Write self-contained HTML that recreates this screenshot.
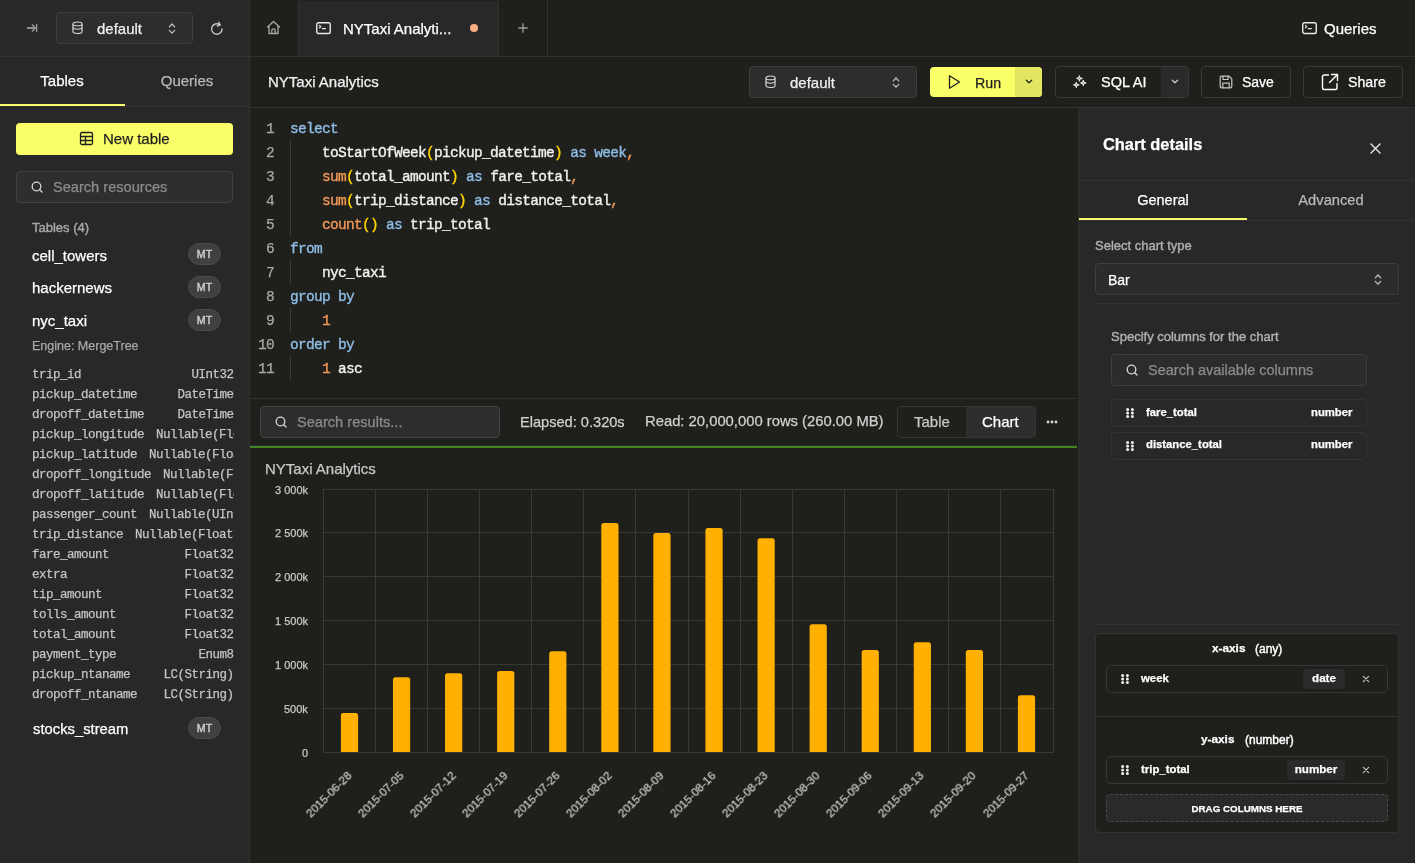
<!DOCTYPE html><html><head><meta charset="utf-8"><style>
html,body{margin:0;padding:0;}
body{width:1415px;height:863px;overflow:hidden;background:#1f1f1c;position:relative;font-family:'Liberation Sans', sans-serif;}
.t{position:absolute;white-space:nowrap;line-height:1;will-change:transform;-webkit-text-stroke-width:0.25px;}
.r{position:absolute;box-sizing:border-box;}
</style></head><body>
<div class="r" style="left:0px;top:0px;width:249px;height:863px;background:#282828;"></div>
<div class="r" style="left:249px;top:0px;width:1px;height:863px;background:#323232;"></div>
<div class="r" style="left:0px;top:56px;width:249px;height:1px;background:#323232;"></div>
<svg class="r" style="left:26px;top:23px;" width="12" height="10" viewBox="0 0 12 10" fill="none"><path d="M1 5H9" stroke="#9b9b9b" stroke-width="1.8"/><path d="M6 1.6L9.4 5L6 8.4" stroke="#9b9b9b" stroke-width="1.4" stroke-linejoin="round"/><path d="M10.6 1V9" stroke="#9b9b9b" stroke-width="1.3"/></svg>
<div class="r" style="left:56px;top:12px;width:137px;height:32px;background:#2d2d2d;border:1px solid #3e3e3e;border-radius:4px;"></div>
<svg class="r" style="left:71.5px;top:20.5px;" width="11" height="14" viewBox="0 0 11 14" fill="none"><path d="M1 2.8C1 1.6 3 1 5.5 1C8 1 10 1.6 10 2.8V10.7C10 11.9 8 12.5 5.5 12.5C3 12.5 1 11.9 1 10.7Z" stroke="#d8d8d8" stroke-width="1.2"/><path d="M1 3.2C1 4.3 3 4.8 5.5 4.8C8 4.8 10 4.3 10 3.2M1 6.6C1 7.7 3 8.2 5.5 8.2C8 8.2 10 7.7 10 6.6" stroke="#d8d8d8" stroke-width="1.1"/></svg>
<div class="t" style="left:97.00px;top:21.30px;font-size:15px;color:#f0f0f0;font-weight:normal;font-family:'Liberation Sans', sans-serif;">default</div>
<svg class="r" style="left:168px;top:22.5px;" width="8" height="11" viewBox="0 0 8 11" fill="none"><path d="M1.3 3.8L4 1L6.7 3.8M1.3 7.4L4 10.2L6.7 7.4" stroke="#c8c8c8" stroke-width="1.2" stroke-linecap="round" stroke-linejoin="round"/></svg>
<svg class="r" style="left:209px;top:20.8px;" width="16" height="16" viewBox="0 0 16 16" fill="none"><path d="M13 8A5.2 5.2 0 1 1 10.6 3.6" stroke="#c8c8c8" stroke-width="1.4" stroke-linecap="round"/><path d="M9.8 1.2L11.2 3.9L8.4 5" stroke="#c8c8c8" stroke-width="1.4" stroke-linecap="round" stroke-linejoin="round"/></svg>
<div class="t" style="left:0.00px;width:124px;text-align:center;top:72.90px;font-size:15px;color:#ffffff;font-weight:normal;font-family:'Liberation Sans', sans-serif;">Tables</div>
<div class="t" style="left:125.00px;width:124px;text-align:center;top:72.90px;font-size:15px;color:#b8b8b8;font-weight:normal;font-family:'Liberation Sans', sans-serif;">Queries</div>
<div class="r" style="left:0px;top:106px;width:249px;height:1px;background:#323232;"></div>
<div class="r" style="left:0px;top:104px;width:125px;height:2px;background:#faff69;"></div>
<div class="r" style="left:16px;top:123px;width:217px;height:32px;background:#faff69;border-radius:4px;"></div>
<svg class="r" style="left:79px;top:131px;" width="15" height="15" viewBox="0 0 15 15" fill="none"><rect x="1.5" y="1.5" width="12" height="12" rx="1.5" stroke="#1f1f1c" stroke-width="1.3"/><path d="M1.5 5.5H13.5M1.5 9.5H13.5M6.5 5.5V13.5" stroke="#1f1f1c" stroke-width="1.3"/></svg>
<div class="t" style="left:103.30px;top:131.30px;font-size:15px;color:#1f1f1c;font-weight:normal;font-family:'Liberation Sans', sans-serif;">New table</div>
<div class="r" style="left:16px;top:171px;width:217px;height:32px;background:#2e2e2e;border:1px solid #414141;border-radius:4px;"></div>
<svg class="r" style="left:31px;top:181px;" width="12" height="12" viewBox="0 0 12 12" fill="none"><circle cx="5.5" cy="5.5" r="4.3" stroke="#d8d8d8" stroke-width="1.3"/><path d="M8.7 8.7L11 11" stroke="#d8d8d8" stroke-width="1.3" stroke-linecap="round"/></svg>
<div class="t" style="left:53.40px;top:179.94px;font-size:14.6px;color:#8c8c8c;font-weight:normal;font-family:'Liberation Sans', sans-serif;">Search resources</div>
<div class="t" style="left:32.30px;top:221.09px;font-size:13px;color:#a8a8a8;font-weight:normal;font-family:'Liberation Sans', sans-serif;-webkit-text-stroke:0.4px #a8a8a8;">Tables (4)</div>
<div class="t" style="left:32.30px;top:247.70px;font-size:15px;color:#ffffff;font-weight:normal;font-family:'Liberation Sans', sans-serif;">cell_towers</div>
<div class="r" style="left:188px;top:243px;width:33px;height:22px;background:#404040;border:1px solid #4a4a4a;border-radius:11px;"></div>
<div class="t" style="left:188.00px;width:33px;text-align:center;top:249.32px;font-size:10.6px;color:#d0d0d0;font-weight:normal;font-family:'Liberation Sans', sans-serif;-webkit-text-stroke:0.4px #d0d0d0;">MT</div>
<div class="t" style="left:32.30px;top:280.30px;font-size:15px;color:#ffffff;font-weight:normal;font-family:'Liberation Sans', sans-serif;">hackernews</div>
<div class="r" style="left:188px;top:276px;width:33px;height:22px;background:#404040;border:1px solid #4a4a4a;border-radius:11px;"></div>
<div class="t" style="left:188.00px;width:33px;text-align:center;top:282.32px;font-size:10.6px;color:#d0d0d0;font-weight:normal;font-family:'Liberation Sans', sans-serif;-webkit-text-stroke:0.4px #d0d0d0;">MT</div>
<div class="t" style="left:32.30px;top:313.00px;font-size:15px;color:#ffffff;font-weight:normal;font-family:'Liberation Sans', sans-serif;">nyc_taxi</div>
<div class="r" style="left:188px;top:309px;width:33px;height:22px;background:#404040;border:1px solid #4a4a4a;border-radius:11px;"></div>
<div class="t" style="left:188.00px;width:33px;text-align:center;top:315.32px;font-size:10.6px;color:#d0d0d0;font-weight:normal;font-family:'Liberation Sans', sans-serif;-webkit-text-stroke:0.4px #d0d0d0;">MT</div>
<div class="t" style="left:32.30px;top:339.92px;font-size:12.5px;color:#a8a8a8;font-weight:normal;font-family:'Liberation Sans', sans-serif;">Engine: MergeTree</div>
<div class="t" style="left:32px;top:368.72px;width:201.5px;display:flex;font-family:'Liberation Mono', monospace;font-size:12.5px;letter-spacing:-0.5px;color:#c4c4c4;"><span style="flex:none;">trip_id</span><span style="flex:1;min-width:0;overflow:hidden;text-align:right;margin-left:12px;">UInt32</span></div>
<div class="t" style="left:32px;top:388.72px;width:201.5px;display:flex;font-family:'Liberation Mono', monospace;font-size:12.5px;letter-spacing:-0.5px;color:#c4c4c4;"><span style="flex:none;">pickup_datetime</span><span style="flex:1;min-width:0;overflow:hidden;text-align:right;margin-left:12px;">DateTime</span></div>
<div class="t" style="left:32px;top:408.72px;width:201.5px;display:flex;font-family:'Liberation Mono', monospace;font-size:12.5px;letter-spacing:-0.5px;color:#c4c4c4;"><span style="flex:none;">dropoff_datetime</span><span style="flex:1;min-width:0;overflow:hidden;text-align:right;margin-left:12px;">DateTime</span></div>
<div class="t" style="left:32px;top:428.72px;width:201.5px;display:flex;font-family:'Liberation Mono', monospace;font-size:12.5px;letter-spacing:-0.5px;color:#c4c4c4;"><span style="flex:none;">pickup_longitude</span><span style="flex:1;min-width:0;overflow:hidden;text-align:right;margin-left:12px;">Nullable(Float64)</span></div>
<div class="t" style="left:32px;top:448.72px;width:201.5px;display:flex;font-family:'Liberation Mono', monospace;font-size:12.5px;letter-spacing:-0.5px;color:#c4c4c4;"><span style="flex:none;">pickup_latitude</span><span style="flex:1;min-width:0;overflow:hidden;text-align:right;margin-left:12px;">Nullable(Float64)</span></div>
<div class="t" style="left:32px;top:468.72px;width:201.5px;display:flex;font-family:'Liberation Mono', monospace;font-size:12.5px;letter-spacing:-0.5px;color:#c4c4c4;"><span style="flex:none;">dropoff_longitude</span><span style="flex:1;min-width:0;overflow:hidden;text-align:right;margin-left:12px;">Nullable(Float64)</span></div>
<div class="t" style="left:32px;top:488.72px;width:201.5px;display:flex;font-family:'Liberation Mono', monospace;font-size:12.5px;letter-spacing:-0.5px;color:#c4c4c4;"><span style="flex:none;">dropoff_latitude</span><span style="flex:1;min-width:0;overflow:hidden;text-align:right;margin-left:12px;">Nullable(Float64)</span></div>
<div class="t" style="left:32px;top:508.72px;width:201.5px;display:flex;font-family:'Liberation Mono', monospace;font-size:12.5px;letter-spacing:-0.5px;color:#c4c4c4;"><span style="flex:none;">passenger_count</span><span style="flex:1;min-width:0;overflow:hidden;text-align:right;margin-left:12px;">Nullable(UInt8)</span></div>
<div class="t" style="left:32px;top:528.72px;width:201.5px;display:flex;font-family:'Liberation Mono', monospace;font-size:12.5px;letter-spacing:-0.5px;color:#c4c4c4;"><span style="flex:none;">trip_distance</span><span style="flex:1;min-width:0;overflow:hidden;text-align:right;margin-left:12px;">Nullable(Float32)</span></div>
<div class="t" style="left:32px;top:548.72px;width:201.5px;display:flex;font-family:'Liberation Mono', monospace;font-size:12.5px;letter-spacing:-0.5px;color:#c4c4c4;"><span style="flex:none;">fare_amount</span><span style="flex:1;min-width:0;overflow:hidden;text-align:right;margin-left:12px;">Float32</span></div>
<div class="t" style="left:32px;top:568.72px;width:201.5px;display:flex;font-family:'Liberation Mono', monospace;font-size:12.5px;letter-spacing:-0.5px;color:#c4c4c4;"><span style="flex:none;">extra</span><span style="flex:1;min-width:0;overflow:hidden;text-align:right;margin-left:12px;">Float32</span></div>
<div class="t" style="left:32px;top:588.72px;width:201.5px;display:flex;font-family:'Liberation Mono', monospace;font-size:12.5px;letter-spacing:-0.5px;color:#c4c4c4;"><span style="flex:none;">tip_amount</span><span style="flex:1;min-width:0;overflow:hidden;text-align:right;margin-left:12px;">Float32</span></div>
<div class="t" style="left:32px;top:608.72px;width:201.5px;display:flex;font-family:'Liberation Mono', monospace;font-size:12.5px;letter-spacing:-0.5px;color:#c4c4c4;"><span style="flex:none;">tolls_amount</span><span style="flex:1;min-width:0;overflow:hidden;text-align:right;margin-left:12px;">Float32</span></div>
<div class="t" style="left:32px;top:628.72px;width:201.5px;display:flex;font-family:'Liberation Mono', monospace;font-size:12.5px;letter-spacing:-0.5px;color:#c4c4c4;"><span style="flex:none;">total_amount</span><span style="flex:1;min-width:0;overflow:hidden;text-align:right;margin-left:12px;">Float32</span></div>
<div class="t" style="left:32px;top:648.72px;width:201.5px;display:flex;font-family:'Liberation Mono', monospace;font-size:12.5px;letter-spacing:-0.5px;color:#c4c4c4;"><span style="flex:none;">payment_type</span><span style="flex:1;min-width:0;overflow:hidden;text-align:right;margin-left:12px;">Enum8</span></div>
<div class="t" style="left:32px;top:668.72px;width:201.5px;display:flex;font-family:'Liberation Mono', monospace;font-size:12.5px;letter-spacing:-0.5px;color:#c4c4c4;"><span style="flex:none;">pickup_ntaname</span><span style="flex:1;min-width:0;overflow:hidden;text-align:right;margin-left:12px;">LC(String)</span></div>
<div class="t" style="left:32px;top:688.72px;width:201.5px;display:flex;font-family:'Liberation Mono', monospace;font-size:12.5px;letter-spacing:-0.5px;color:#c4c4c4;"><span style="flex:none;">dropoff_ntaname</span><span style="flex:1;min-width:0;overflow:hidden;text-align:right;margin-left:12px;">LC(String)</span></div>
<div class="t" style="left:32.70px;top:721.77px;font-size:14.8px;color:#ffffff;font-weight:normal;font-family:'Liberation Sans', sans-serif;">stocks_stream</div>
<div class="r" style="left:188px;top:717px;width:33px;height:22px;background:#404040;border:1px solid #4a4a4a;border-radius:11px;"></div>
<div class="t" style="left:188.00px;width:33px;text-align:center;top:723.32px;font-size:10.6px;color:#d0d0d0;font-weight:normal;font-family:'Liberation Sans', sans-serif;-webkit-text-stroke:0.4px #d0d0d0;">MT</div>
<div class="r" style="left:250px;top:56px;width:1165px;height:1px;background:#323232;"></div>
<div class="r" style="left:298px;top:0px;width:1px;height:56px;background:#323232;"></div>
<div class="r" style="left:299px;top:1px;width:199px;height:55px;background:#282828;"></div>
<div class="r" style="left:498px;top:1px;width:1px;height:55px;background:#323232;"></div>
<div class="r" style="left:547px;top:0px;width:1px;height:56px;background:#323232;"></div>
<svg class="r" style="left:266px;top:20px;" width="15" height="15" viewBox="0 0 15 15" fill="none"><path d="M1.5 7L7.5 1.5L13.5 7M3 5.8V13.5H12V5.8M5.8 13.5V10.5C5.8 9.5 6.6 8.8 7.5 8.8C8.4 8.8 9.2 9.5 9.2 10.5V13.5" stroke="#a8a8a8" stroke-width="1.3" stroke-linejoin="round" stroke-linecap="round"/></svg>
<svg class="r" style="left:315.5px;top:21.5px;" width="15" height="13" viewBox="0 0 15 13" fill="none"><rect x="0.75" y="0.75" width="13.5" height="10.8" rx="1.8" stroke="#e8e8e8" stroke-width="1.4"/><path d="M3.4 3.4L4.9 4.6L3.4 5.8M6.2 6.6H9.4" stroke="#e8e8e8" stroke-width="1.2" stroke-linecap="round" stroke-linejoin="round"/></svg>
<div class="t" style="left:343.40px;top:21.30px;font-size:15px;color:#ffffff;font-weight:normal;font-family:'Liberation Sans', sans-serif;">NYTaxi Analyti...</div>
<div class="r" style="left:470px;top:24px;width:8px;height:8px;border-radius:50%;background:#f7ae84;"></div>
<svg class="r" style="left:518px;top:23px;" width="10" height="10" viewBox="0 0 10 10" fill="none"><path d="M5 0.3V9.7M0.3 5H9.7" stroke="#9c9c9c" stroke-width="1.3"/></svg>
<svg class="r" style="left:1301.5px;top:21.5px;" width="15" height="13" viewBox="0 0 15 13" fill="none"><rect x="0.75" y="0.75" width="13.5" height="10.8" rx="1.8" stroke="#e8e8e8" stroke-width="1.4"/><path d="M3.4 3.4L4.9 4.6L3.4 5.8M6.2 6.6H9.4" stroke="#e8e8e8" stroke-width="1.2" stroke-linecap="round" stroke-linejoin="round"/></svg>
<div class="t" style="left:1324.40px;top:21.20px;font-size:15px;color:#ffffff;font-weight:normal;font-family:'Liberation Sans', sans-serif;">Queries</div>
<div class="t" style="left:268.00px;top:74.30px;font-size:15px;color:#f0f0f0;font-weight:normal;font-family:'Liberation Sans', sans-serif;">NYTaxi Analytics</div>
<div class="r" style="left:250px;top:107px;width:1165px;height:1px;background:#323232;"></div>
<div class="r" style="left:749px;top:66px;width:168px;height:32px;background:#2d2d2d;border:1px solid #3e3e3e;border-radius:4px;"></div>
<svg class="r" style="left:764.5px;top:75px;" width="11" height="14" viewBox="0 0 11 14" fill="none"><path d="M1 2.8C1 1.6 3 1 5.5 1C8 1 10 1.6 10 2.8V10.7C10 11.9 8 12.5 5.5 12.5C3 12.5 1 11.9 1 10.7Z" stroke="#d8d8d8" stroke-width="1.2"/><path d="M1 3.2C1 4.3 3 4.8 5.5 4.8C8 4.8 10 4.3 10 3.2M1 6.6C1 7.7 3 8.2 5.5 8.2C8 8.2 10 7.7 10 6.6" stroke="#d8d8d8" stroke-width="1.1"/></svg>
<div class="t" style="left:790.30px;top:75.00px;font-size:15px;color:#f0f0f0;font-weight:normal;font-family:'Liberation Sans', sans-serif;">default</div>
<svg class="r" style="left:892px;top:76.5px;" width="8" height="11" viewBox="0 0 8 11" fill="none"><path d="M1.3 3.8L4 1L6.7 3.8M1.3 7.4L4 10.2L6.7 7.4" stroke="#c8c8c8" stroke-width="1.2" stroke-linecap="round" stroke-linejoin="round"/></svg>
<div class="r" style="left:930px;top:67px;width:112px;height:30px;background:#faff69;border-radius:4px;overflow:hidden;"></div>
<div class="r" style="left:1015px;top:67px;width:27px;height:30px;background:#e2e55f;border-radius:0 4px 4px 0;"></div>
<svg class="r" style="left:948px;top:74px;" width="13" height="16" viewBox="0 0 13 16" fill="none"><path d="M1.5 1.8V14.2L11.5 8Z" stroke="#1f1f1c" stroke-width="1.3" stroke-linejoin="round"/></svg>
<div class="t" style="left:974.80px;top:75.98px;font-size:14.2px;color:#1f1f1c;font-weight:normal;font-family:'Liberation Sans', sans-serif;">Run</div>
<svg class="r" style="left:1025px;top:79px;" width="8" height="6" viewBox="0 0 8 6" fill="none"><path d="M1.3 1.2L4 3.8L6.7 1.2" stroke="#1f1f1c" stroke-width="1.2" stroke-linecap="round" stroke-linejoin="round"/></svg>
<div class="r" style="left:1055px;top:66px;width:134px;height:32px;border:1px solid #3a3a3a;border-radius:4px;"></div>
<div class="r" style="left:1161px;top:67px;width:27px;height:30px;background:#2a2a2a;border-radius:0 3px 3px 0;"></div>
<svg class="r" style="left:1073px;top:75px;" width="14" height="14" viewBox="0 0 14 14" fill="none"><path d="M6.4 0.7999999999999998Q6.4 3.4 9.0 3.4Q6.4 3.4 6.4 6.0Q6.4 3.4 3.8000000000000003 3.4Q6.4 3.4 6.4 0.7999999999999998ZM10.3 5.300000000000001Q10.3 7.9 12.9 7.9Q10.3 7.9 10.3 10.5Q10.3 7.9 7.700000000000001 7.9Q10.3 7.9 10.3 5.300000000000001ZM3.3 7.300000000000001Q3.3 9.9 5.9 9.9Q3.3 9.9 3.3 12.5Q3.3 9.9 0.6999999999999997 9.9Q3.3 9.9 3.3 7.300000000000001Z" stroke="#e8e8e8" stroke-width="1.1" stroke-linejoin="round"/></svg>
<div class="t" style="left:1100.80px;top:75.42px;font-size:14.5px;color:#ffffff;font-weight:normal;font-family:'Liberation Sans', sans-serif;">SQL AI</div>
<svg class="r" style="left:1171px;top:79px;" width="8" height="6" viewBox="0 0 8 6" fill="none"><path d="M1.3 1.2L4 3.8L6.7 1.2" stroke="#d0d0d0" stroke-width="1.2" stroke-linecap="round" stroke-linejoin="round"/></svg>
<div class="r" style="left:1201px;top:66px;width:90px;height:32px;border:1px solid #3a3a3a;border-radius:4px;"></div>
<svg class="r" style="left:1218.5px;top:74.5px;" width="14" height="14" viewBox="0 0 14 14" fill="none"><path d="M1.2 2.5C1.2 1.8 1.8 1.2 2.5 1.2H10L12.8 4V11.5C12.8 12.2 12.2 12.8 11.5 12.8H2.5C1.8 12.8 1.2 12.2 1.2 11.5Z M4 1.2V4.5H9V1.2 M3.8 12.8V8.2H10.2V12.8" stroke="#c8c8c8" stroke-width="1.2" stroke-linejoin="round"/></svg>
<div class="t" style="left:1241.70px;top:74.85px;font-size:14px;color:#ffffff;font-weight:normal;font-family:'Liberation Sans', sans-serif;">Save</div>
<div class="r" style="left:1303px;top:66px;width:100px;height:32px;border:1px solid #3a3a3a;border-radius:4px;"></div>
<svg class="r" style="left:1321px;top:73px;" width="18" height="18" viewBox="0 0 18 18" fill="none"><path d="M7.5 2H3C2.2 2 1.5 2.7 1.5 3.5V15C1.5 15.8 2.2 16.5 3 16.5H14.5C15.3 16.5 16 15.8 16 15V10.5 M10.5 1.5H16.5V7.5 M16.5 1.5L8.5 9.5" stroke="#ffffff" stroke-width="1.4" stroke-linecap="round" stroke-linejoin="round"/></svg>
<div class="t" style="left:1348.20px;top:74.68px;font-size:14.2px;color:#ffffff;font-weight:normal;font-family:'Liberation Sans', sans-serif;">Share</div>
<div class="t" style="right:1141.30px;top:121.89px;font-size:14.5px;color:#a8a8a8;font-weight:normal;font-family:'Liberation Mono', monospace;letter-spacing:-0.7px;">1</div>
<div class="t" style="left:289.70px;top:121.89px;font-size:14.5px;color:#fff;font-weight:normal;font-family:'Liberation Mono', monospace;letter-spacing:-0.7px;"><span style="color:#8fbde6;-webkit-text-stroke:0.35px #8fbde6">select</span></div>
<div class="t" style="right:1141.30px;top:145.89px;font-size:14.5px;color:#a8a8a8;font-weight:normal;font-family:'Liberation Mono', monospace;letter-spacing:-0.7px;">2</div>
<div class="t" style="left:289.70px;top:145.89px;font-size:14.5px;color:#fff;font-weight:normal;font-family:'Liberation Mono', monospace;letter-spacing:-0.7px;"><span style="color:#fff;-webkit-text-stroke:0.35px #fff">&nbsp;&nbsp;&nbsp;&nbsp;</span><span style="color:#f2f2f2;-webkit-text-stroke:0.35px #f2f2f2">toStartOfWeek</span><span style="color:#ffd500;-webkit-text-stroke:0.35px #ffd500">(</span><span style="color:#f2f2f2;-webkit-text-stroke:0.35px #f2f2f2">pickup_datetime</span><span style="color:#ffd500;-webkit-text-stroke:0.35px #ffd500">)</span><span style="color:#fff;-webkit-text-stroke:0.35px #fff">&nbsp;</span><span style="color:#8fbde6;-webkit-text-stroke:0.35px #8fbde6">as</span><span style="color:#fff;-webkit-text-stroke:0.35px #fff">&nbsp;</span><span style="color:#8fbde6;-webkit-text-stroke:0.35px #8fbde6">week</span><span style="color:#f39a57;-webkit-text-stroke:0.35px #f39a57">,</span></div>
<div class="t" style="right:1141.30px;top:169.89px;font-size:14.5px;color:#a8a8a8;font-weight:normal;font-family:'Liberation Mono', monospace;letter-spacing:-0.7px;">3</div>
<div class="t" style="left:289.70px;top:169.89px;font-size:14.5px;color:#fff;font-weight:normal;font-family:'Liberation Mono', monospace;letter-spacing:-0.7px;"><span style="color:#fff;-webkit-text-stroke:0.35px #fff">&nbsp;&nbsp;&nbsp;&nbsp;</span><span style="color:#f39a57;-webkit-text-stroke:0.35px #f39a57">sum</span><span style="color:#ffd500;-webkit-text-stroke:0.35px #ffd500">(</span><span style="color:#f2f2f2;-webkit-text-stroke:0.35px #f2f2f2">total_amount</span><span style="color:#ffd500;-webkit-text-stroke:0.35px #ffd500">)</span><span style="color:#fff;-webkit-text-stroke:0.35px #fff">&nbsp;</span><span style="color:#8fbde6;-webkit-text-stroke:0.35px #8fbde6">as</span><span style="color:#fff;-webkit-text-stroke:0.35px #fff">&nbsp;</span><span style="color:#f2f2f2;-webkit-text-stroke:0.35px #f2f2f2">fare_total</span><span style="color:#f39a57;-webkit-text-stroke:0.35px #f39a57">,</span></div>
<div class="t" style="right:1141.30px;top:193.89px;font-size:14.5px;color:#a8a8a8;font-weight:normal;font-family:'Liberation Mono', monospace;letter-spacing:-0.7px;">4</div>
<div class="t" style="left:289.70px;top:193.89px;font-size:14.5px;color:#fff;font-weight:normal;font-family:'Liberation Mono', monospace;letter-spacing:-0.7px;"><span style="color:#fff;-webkit-text-stroke:0.35px #fff">&nbsp;&nbsp;&nbsp;&nbsp;</span><span style="color:#f39a57;-webkit-text-stroke:0.35px #f39a57">sum</span><span style="color:#ffd500;-webkit-text-stroke:0.35px #ffd500">(</span><span style="color:#f2f2f2;-webkit-text-stroke:0.35px #f2f2f2">trip_distance</span><span style="color:#ffd500;-webkit-text-stroke:0.35px #ffd500">)</span><span style="color:#fff;-webkit-text-stroke:0.35px #fff">&nbsp;</span><span style="color:#8fbde6;-webkit-text-stroke:0.35px #8fbde6">as</span><span style="color:#fff;-webkit-text-stroke:0.35px #fff">&nbsp;</span><span style="color:#f2f2f2;-webkit-text-stroke:0.35px #f2f2f2">distance_total</span><span style="color:#f39a57;-webkit-text-stroke:0.35px #f39a57">,</span></div>
<div class="t" style="right:1141.30px;top:217.89px;font-size:14.5px;color:#a8a8a8;font-weight:normal;font-family:'Liberation Mono', monospace;letter-spacing:-0.7px;">5</div>
<div class="t" style="left:289.70px;top:217.89px;font-size:14.5px;color:#fff;font-weight:normal;font-family:'Liberation Mono', monospace;letter-spacing:-0.7px;"><span style="color:#fff;-webkit-text-stroke:0.35px #fff">&nbsp;&nbsp;&nbsp;&nbsp;</span><span style="color:#f39a57;-webkit-text-stroke:0.35px #f39a57">count</span><span style="color:#ffd500;-webkit-text-stroke:0.35px #ffd500">()</span><span style="color:#fff;-webkit-text-stroke:0.35px #fff">&nbsp;</span><span style="color:#8fbde6;-webkit-text-stroke:0.35px #8fbde6">as</span><span style="color:#fff;-webkit-text-stroke:0.35px #fff">&nbsp;</span><span style="color:#f2f2f2;-webkit-text-stroke:0.35px #f2f2f2">trip_total</span></div>
<div class="t" style="right:1141.30px;top:241.89px;font-size:14.5px;color:#a8a8a8;font-weight:normal;font-family:'Liberation Mono', monospace;letter-spacing:-0.7px;">6</div>
<div class="t" style="left:289.70px;top:241.89px;font-size:14.5px;color:#fff;font-weight:normal;font-family:'Liberation Mono', monospace;letter-spacing:-0.7px;"><span style="color:#8fbde6;-webkit-text-stroke:0.35px #8fbde6">from</span></div>
<div class="t" style="right:1141.30px;top:265.89px;font-size:14.5px;color:#a8a8a8;font-weight:normal;font-family:'Liberation Mono', monospace;letter-spacing:-0.7px;">7</div>
<div class="t" style="left:289.70px;top:265.89px;font-size:14.5px;color:#fff;font-weight:normal;font-family:'Liberation Mono', monospace;letter-spacing:-0.7px;"><span style="color:#fff;-webkit-text-stroke:0.35px #fff">&nbsp;&nbsp;&nbsp;&nbsp;</span><span style="color:#f2f2f2;-webkit-text-stroke:0.35px #f2f2f2">nyc_taxi</span></div>
<div class="t" style="right:1141.30px;top:289.89px;font-size:14.5px;color:#a8a8a8;font-weight:normal;font-family:'Liberation Mono', monospace;letter-spacing:-0.7px;">8</div>
<div class="t" style="left:289.70px;top:289.89px;font-size:14.5px;color:#fff;font-weight:normal;font-family:'Liberation Mono', monospace;letter-spacing:-0.7px;"><span style="color:#8fbde6;-webkit-text-stroke:0.35px #8fbde6">group&nbsp;by</span></div>
<div class="t" style="right:1141.30px;top:313.89px;font-size:14.5px;color:#a8a8a8;font-weight:normal;font-family:'Liberation Mono', monospace;letter-spacing:-0.7px;">9</div>
<div class="t" style="left:289.70px;top:313.89px;font-size:14.5px;color:#fff;font-weight:normal;font-family:'Liberation Mono', monospace;letter-spacing:-0.7px;"><span style="color:#fff;-webkit-text-stroke:0.35px #fff">&nbsp;&nbsp;&nbsp;&nbsp;</span><span style="color:#f39a57;-webkit-text-stroke:0.35px #f39a57">1</span></div>
<div class="t" style="right:1141.30px;top:337.89px;font-size:14.5px;color:#a8a8a8;font-weight:normal;font-family:'Liberation Mono', monospace;letter-spacing:-0.7px;">10</div>
<div class="t" style="left:289.70px;top:337.89px;font-size:14.5px;color:#fff;font-weight:normal;font-family:'Liberation Mono', monospace;letter-spacing:-0.7px;"><span style="color:#8fbde6;-webkit-text-stroke:0.35px #8fbde6">order&nbsp;by</span></div>
<div class="t" style="right:1141.30px;top:361.89px;font-size:14.5px;color:#a8a8a8;font-weight:normal;font-family:'Liberation Mono', monospace;letter-spacing:-0.7px;">11</div>
<div class="t" style="left:289.70px;top:361.89px;font-size:14.5px;color:#fff;font-weight:normal;font-family:'Liberation Mono', monospace;letter-spacing:-0.7px;"><span style="color:#fff;-webkit-text-stroke:0.35px #fff">&nbsp;&nbsp;&nbsp;&nbsp;</span><span style="color:#f39a57;-webkit-text-stroke:0.35px #f39a57">1</span><span style="color:#fff;-webkit-text-stroke:0.35px #fff">&nbsp;</span><span style="color:#f2f2f2;-webkit-text-stroke:0.35px #f2f2f2">asc</span></div>
<div class="r" style="left:290px;top:140px;width:1px;height:96px;background:#3c3c3c;"></div>
<div class="r" style="left:290px;top:260px;width:1px;height:24px;background:#3c3c3c;"></div>
<div class="r" style="left:290px;top:308px;width:1px;height:24px;background:#3c3c3c;"></div>
<div class="r" style="left:290px;top:356px;width:1px;height:24px;background:#3c3c3c;"></div>
<div class="r" style="left:250px;top:398px;width:828px;height:1px;background:#323232;"></div>
<div class="r" style="left:260px;top:406px;width:240px;height:32px;background:#2d2d2d;border:1px solid #424242;border-radius:4px;"></div>
<svg class="r" style="left:274.5px;top:416px;" width="12" height="12" viewBox="0 0 12 12" fill="none"><circle cx="5.5" cy="5.5" r="4.3" stroke="#d8d8d8" stroke-width="1.3"/><path d="M8.7 8.7L11 11" stroke="#d8d8d8" stroke-width="1.3" stroke-linecap="round"/></svg>
<div class="t" style="left:297.30px;top:414.84px;font-size:14.6px;color:#8c8c8c;font-weight:normal;font-family:'Liberation Sans', sans-serif;">Search results...</div>
<div class="t" style="left:519.50px;top:414.64px;font-size:14.6px;color:#d0d0d0;font-weight:normal;font-family:'Liberation Sans', sans-serif;">Elapsed: 0.320s</div>
<div class="t" style="left:645.00px;top:414.47px;font-size:14.8px;color:#d0d0d0;font-weight:normal;font-family:'Liberation Sans', sans-serif;">Read: 20,000,000 rows (260.00 MB)</div>
<div class="r" style="left:897px;top:406px;width:139px;height:32px;border:1px solid #363636;border-radius:4px;"></div>
<div class="r" style="left:966px;top:407px;width:69px;height:30px;background:#2e2e2e;border-radius:0 3px 3px 0;"></div>
<div class="t" style="left:914.30px;top:414.30px;font-size:15px;color:#c8c8c8;font-weight:normal;font-family:'Liberation Sans', sans-serif;">Table</div>
<div class="t" style="left:982.20px;top:414.30px;font-size:15px;color:#ffffff;font-weight:normal;font-family:'Liberation Sans', sans-serif;">Chart</div>
<svg class="r" style="left:1046px;top:420px;" width="12" height="4" viewBox="0 0 12 4" fill="none"><circle cx="2" cy="2" r="1.4" fill="#d8d8d8"/><circle cx="6" cy="2" r="1.4" fill="#d8d8d8"/><circle cx="10" cy="2" r="1.4" fill="#d8d8d8"/></svg>
<div class="r" style="left:250px;top:445px;width:828px;height:1px;background:#2d2a30;"></div>
<div class="r" style="left:250px;top:446px;width:828px;height:2px;background:#438525;"></div>
<div class="t" style="left:264.50px;top:461.30px;font-size:15px;color:#c8c8c8;font-weight:normal;font-family:'Liberation Sans', sans-serif;">NYTaxi Analytics</div>
<svg class="r" style="left:0;top:0" width="1415" height="863"><rect x="323" y="489" width="731" height="1" fill="#383838"/><rect x="323" y="532" width="731" height="1" fill="#383838"/><rect x="323" y="576" width="731" height="1" fill="#383838"/><rect x="323" y="620" width="731" height="1" fill="#383838"/><rect x="323" y="664" width="731" height="1" fill="#383838"/><rect x="323" y="708" width="731" height="1" fill="#383838"/><rect x="323" y="752" width="731" height="1" fill="#383838"/><rect x="323" y="489" width="1" height="264" fill="#383838"/><rect x="375" y="489" width="1" height="264" fill="#383838"/><rect x="427" y="489" width="1" height="264" fill="#383838"/><rect x="479" y="489" width="1" height="264" fill="#383838"/><rect x="531" y="489" width="1" height="264" fill="#383838"/><rect x="583" y="489" width="1" height="264" fill="#383838"/><rect x="635" y="489" width="1" height="264" fill="#383838"/><rect x="688" y="489" width="1" height="264" fill="#383838"/><rect x="740" y="489" width="1" height="264" fill="#383838"/><rect x="792" y="489" width="1" height="264" fill="#383838"/><rect x="844" y="489" width="1" height="264" fill="#383838"/><rect x="896" y="489" width="1" height="264" fill="#383838"/><rect x="948" y="489" width="1" height="264" fill="#383838"/><rect x="1000" y="489" width="1" height="264" fill="#383838"/><rect x="1053" y="489" width="1" height="264" fill="#383838"/><path d="M340.90 752 V715.50 Q340.90 713.00 343.40 713.00 H355.60 Q358.10 713.00 358.10 715.50 V752 Z" fill="#ffb000"/><path d="M392.98 752 V679.70 Q392.98 677.20 395.48 677.20 H407.68 Q410.18 677.20 410.18 679.70 V752 Z" fill="#ffb000"/><path d="M445.05 752 V675.70 Q445.05 673.20 447.55 673.20 H459.75 Q462.25 673.20 462.25 675.70 V752 Z" fill="#ffb000"/><path d="M497.13 752 V673.60 Q497.13 671.10 499.63 671.10 H511.83 Q514.33 671.10 514.33 673.60 V752 Z" fill="#ffb000"/><path d="M549.21 752 V653.70 Q549.21 651.20 551.71 651.20 H563.91 Q566.41 651.20 566.41 653.70 V752 Z" fill="#ffb000"/><path d="M601.28 752 V525.40 Q601.28 522.90 603.78 522.90 H615.99 Q618.49 522.90 618.49 525.40 V752 Z" fill="#ffb000"/><path d="M653.36 752 V535.60 Q653.36 533.10 655.86 533.10 H668.06 Q670.56 533.10 670.56 535.60 V752 Z" fill="#ffb000"/><path d="M705.44 752 V530.50 Q705.44 528.00 707.94 528.00 H720.14 Q722.64 528.00 722.64 530.50 V752 Z" fill="#ffb000"/><path d="M757.52 752 V540.80 Q757.52 538.30 760.02 538.30 H772.22 Q774.72 538.30 774.72 540.80 V752 Z" fill="#ffb000"/><path d="M809.59 752 V626.70 Q809.59 624.20 812.09 624.20 H824.29 Q826.79 624.20 826.79 626.70 V752 Z" fill="#ffb000"/><path d="M861.67 752 V652.60 Q861.67 650.10 864.17 650.10 H876.37 Q878.87 650.10 878.87 652.60 V752 Z" fill="#ffb000"/><path d="M913.75 752 V644.80 Q913.75 642.30 916.25 642.30 H928.45 Q930.95 642.30 930.95 644.80 V752 Z" fill="#ffb000"/><path d="M965.82 752 V652.60 Q965.82 650.10 968.32 650.10 H980.52 Q983.02 650.10 983.02 652.60 V752 Z" fill="#ffb000"/><path d="M1017.90 752 V697.80 Q1017.90 695.30 1020.40 695.30 H1032.60 Q1035.10 695.30 1035.10 697.80 V752 Z" fill="#ffb000"/></svg>
<div class="t" style="right:1107.00px;top:484.69px;font-size:11px;color:#c8c8c8;font-weight:normal;font-family:'Liberation Sans', sans-serif;">3 000k</div>
<div class="t" style="right:1107.00px;top:527.69px;font-size:11px;color:#c8c8c8;font-weight:normal;font-family:'Liberation Sans', sans-serif;">2 500k</div>
<div class="t" style="right:1107.00px;top:571.69px;font-size:11px;color:#c8c8c8;font-weight:normal;font-family:'Liberation Sans', sans-serif;">2 000k</div>
<div class="t" style="right:1107.00px;top:615.69px;font-size:11px;color:#c8c8c8;font-weight:normal;font-family:'Liberation Sans', sans-serif;">1 500k</div>
<div class="t" style="right:1107.00px;top:659.69px;font-size:11px;color:#c8c8c8;font-weight:normal;font-family:'Liberation Sans', sans-serif;">1 000k</div>
<div class="t" style="right:1107.00px;top:703.69px;font-size:11px;color:#c8c8c8;font-weight:normal;font-family:'Liberation Sans', sans-serif;">500k</div>
<div class="t" style="right:1107.00px;top:747.69px;font-size:11px;color:#c8c8c8;font-weight:normal;font-family:'Liberation Sans', sans-serif;">0</div>
<div class="t" style="left:345.50px;top:770.00px;font-size:11.5px;color:#c8c8c8;transform-origin:0 0;transform:rotate(-45deg) translateX(-100%);">2015-06-28</div>
<div class="t" style="left:397.58px;top:770.00px;font-size:11.5px;color:#c8c8c8;transform-origin:0 0;transform:rotate(-45deg) translateX(-100%);">2015-07-05</div>
<div class="t" style="left:449.65px;top:770.00px;font-size:11.5px;color:#c8c8c8;transform-origin:0 0;transform:rotate(-45deg) translateX(-100%);">2015-07-12</div>
<div class="t" style="left:501.73px;top:770.00px;font-size:11.5px;color:#c8c8c8;transform-origin:0 0;transform:rotate(-45deg) translateX(-100%);">2015-07-19</div>
<div class="t" style="left:553.81px;top:770.00px;font-size:11.5px;color:#c8c8c8;transform-origin:0 0;transform:rotate(-45deg) translateX(-100%);">2015-07-26</div>
<div class="t" style="left:605.88px;top:770.00px;font-size:11.5px;color:#c8c8c8;transform-origin:0 0;transform:rotate(-45deg) translateX(-100%);">2015-08-02</div>
<div class="t" style="left:657.96px;top:770.00px;font-size:11.5px;color:#c8c8c8;transform-origin:0 0;transform:rotate(-45deg) translateX(-100%);">2015-08-09</div>
<div class="t" style="left:710.04px;top:770.00px;font-size:11.5px;color:#c8c8c8;transform-origin:0 0;transform:rotate(-45deg) translateX(-100%);">2015-08-16</div>
<div class="t" style="left:762.12px;top:770.00px;font-size:11.5px;color:#c8c8c8;transform-origin:0 0;transform:rotate(-45deg) translateX(-100%);">2015-08-23</div>
<div class="t" style="left:814.19px;top:770.00px;font-size:11.5px;color:#c8c8c8;transform-origin:0 0;transform:rotate(-45deg) translateX(-100%);">2015-08-30</div>
<div class="t" style="left:866.27px;top:770.00px;font-size:11.5px;color:#c8c8c8;transform-origin:0 0;transform:rotate(-45deg) translateX(-100%);">2015-09-06</div>
<div class="t" style="left:918.35px;top:770.00px;font-size:11.5px;color:#c8c8c8;transform-origin:0 0;transform:rotate(-45deg) translateX(-100%);">2015-09-13</div>
<div class="t" style="left:970.42px;top:770.00px;font-size:11.5px;color:#c8c8c8;transform-origin:0 0;transform:rotate(-45deg) translateX(-100%);">2015-09-20</div>
<div class="t" style="left:1022.50px;top:770.00px;font-size:11.5px;color:#c8c8c8;transform-origin:0 0;transform:rotate(-45deg) translateX(-100%);">2015-09-27</div>
<div class="r" style="left:1077px;top:108px;width:1px;height:755px;background:#1b1b18;"></div>
<div class="r" style="left:1078px;top:108px;width:1px;height:755px;background:#323232;"></div>
<div class="r" style="left:1079px;top:108px;width:336px;height:755px;background:#282828;"></div>
<div class="t" style="left:1103.40px;top:136.31px;font-size:16.4px;color:#ffffff;font-weight:bold;font-family:'Liberation Sans', sans-serif;">Chart details</div>
<svg class="r" style="left:1369.5px;top:142.5px;" width="11" height="11" viewBox="0 0 11 11" fill="none"><path d="M1 1L10 10M10 1L1 10" stroke="#e8e8e8" stroke-width="1.4" stroke-linecap="round"/></svg>
<div class="r" style="left:1079px;top:180px;width:336px;height:1px;background:#323232;"></div>
<div class="t" style="left:1083.00px;width:160px;text-align:center;top:192.72px;font-size:14.5px;color:#ffffff;font-weight:normal;font-family:'Liberation Sans', sans-serif;">General</div>
<div class="t" style="left:1250.50px;width:160px;text-align:center;top:192.55px;font-size:14.7px;color:#b8b8b8;font-weight:normal;font-family:'Liberation Sans', sans-serif;">Advanced</div>
<div class="r" style="left:1079px;top:220px;width:336px;height:1px;background:#323232;"></div>
<div class="r" style="left:1079px;top:218px;width:168px;height:2px;background:#faff69;"></div>
<div class="t" style="left:1095.10px;top:238.99px;font-size:13px;color:#b0b0b0;font-weight:normal;font-family:'Liberation Sans', sans-serif;-webkit-text-stroke:0.4px #b0b0b0;">Select chart type</div>
<div class="r" style="left:1095px;top:263px;width:304px;height:32px;background:#2c2c2c;border:1px solid #3e3e3e;border-radius:4px;"></div>
<div class="t" style="left:1107.80px;top:272.55px;font-size:14px;color:#ffffff;font-weight:normal;font-family:'Liberation Sans', sans-serif;">Bar</div>
<svg class="r" style="left:1374px;top:273.5px;" width="8" height="11" viewBox="0 0 8 11" fill="none"><path d="M1.3 3.8L4 1L6.7 3.8M1.3 7.4L4 10.2L6.7 7.4" stroke="#c8c8c8" stroke-width="1.2" stroke-linecap="round" stroke-linejoin="round"/></svg>
<div class="r" style="left:1095px;top:303px;width:304px;height:1px;background:#323232;"></div>
<div class="t" style="left:1111.10px;top:330.09px;font-size:13px;color:#b0b0b0;font-weight:normal;font-family:'Liberation Sans', sans-serif;-webkit-text-stroke:0.4px #b0b0b0;">Specify columns for the chart</div>
<div class="r" style="left:1111px;top:354px;width:256px;height:32px;background:#2c2c2c;border:1px solid #3e3e3e;border-radius:4px;"></div>
<svg class="r" style="left:1126px;top:364px;" width="12" height="12" viewBox="0 0 12 12" fill="none"><circle cx="5.5" cy="5.5" r="4.3" stroke="#d8d8d8" stroke-width="1.3"/><path d="M8.7 8.7L11 11" stroke="#d8d8d8" stroke-width="1.3" stroke-linecap="round"/></svg>
<div class="t" style="left:1148.40px;top:362.52px;font-size:14.5px;color:#8c8c8c;font-weight:normal;font-family:'Liberation Sans', sans-serif;">Search available columns</div>
<div class="r" style="left:1111px;top:399px;width:256px;height:28px;border:1px solid #333333;border-radius:4px;"></div>
<svg class="r" style="left:1126px;top:408.0px;" width="8" height="10" viewBox="0 0 8 10" fill="none"><circle cx="1.6" cy="1.6" r="1.5" fill="#f0f0f0"/><circle cx="6.4" cy="1.6" r="1.5" fill="#f0f0f0"/><circle cx="1.6" cy="5" r="1.5" fill="#f0f0f0"/><circle cx="6.4" cy="5" r="1.5" fill="#f0f0f0"/><circle cx="1.6" cy="8.4" r="1.5" fill="#f0f0f0"/><circle cx="6.4" cy="8.4" r="1.5" fill="#f0f0f0"/></svg>
<div class="t" style="left:1146.40px;top:406.93px;font-size:11.3px;color:#ffffff;font-weight:bold;font-family:'Liberation Sans', sans-serif;">fare_total</div>
<div class="t" style="right:63.00px;top:406.93px;font-size:11.3px;color:#ffffff;font-weight:bold;font-family:'Liberation Sans', sans-serif;">number</div>
<div class="r" style="left:1111px;top:432px;width:256px;height:28px;border:1px solid #333333;border-radius:4px;"></div>
<svg class="r" style="left:1126px;top:441.0px;" width="8" height="10" viewBox="0 0 8 10" fill="none"><circle cx="1.6" cy="1.6" r="1.5" fill="#f0f0f0"/><circle cx="6.4" cy="1.6" r="1.5" fill="#f0f0f0"/><circle cx="1.6" cy="5" r="1.5" fill="#f0f0f0"/><circle cx="6.4" cy="5" r="1.5" fill="#f0f0f0"/><circle cx="1.6" cy="8.4" r="1.5" fill="#f0f0f0"/><circle cx="6.4" cy="8.4" r="1.5" fill="#f0f0f0"/></svg>
<div class="t" style="left:1146.40px;top:439.33px;font-size:11.3px;color:#ffffff;font-weight:bold;font-family:'Liberation Sans', sans-serif;">distance_total</div>
<div class="t" style="right:63.00px;top:439.33px;font-size:11.3px;color:#ffffff;font-weight:bold;font-family:'Liberation Sans', sans-serif;">number</div>
<div class="r" style="left:1095px;top:624px;width:304px;height:1px;background:#323232;"></div>
<div class="r" style="left:1095px;top:633px;width:304px;height:200px;background:#1f1f1c;border:1px solid #333333;border-radius:4px;"></div>
<div class="t" style="left:1211.50px;top:643.21px;font-size:11.8px;color:#ffffff;font-weight:bold;font-family:'Liberation Sans', sans-serif;">x-axis</div>
<div class="t" style="left:1255.20px;top:643.04px;font-size:12px;color:#ffffff;font-weight:normal;font-family:'Liberation Sans', sans-serif;-webkit-text-stroke:0.4px #ffffff;">(any)</div>
<div class="r" style="left:1106px;top:665px;width:282px;height:28px;border:1px solid #373737;border-radius:5px;"></div>
<svg class="r" style="left:1121px;top:673.5px;" width="8" height="10" viewBox="0 0 8 10" fill="none"><circle cx="1.6" cy="1.6" r="1.5" fill="#f0f0f0"/><circle cx="6.4" cy="1.6" r="1.5" fill="#f0f0f0"/><circle cx="1.6" cy="5" r="1.5" fill="#f0f0f0"/><circle cx="6.4" cy="5" r="1.5" fill="#f0f0f0"/><circle cx="1.6" cy="8.4" r="1.5" fill="#f0f0f0"/><circle cx="6.4" cy="8.4" r="1.5" fill="#f0f0f0"/></svg>
<div class="t" style="left:1141.20px;top:672.65px;font-size:11.4px;color:#ffffff;font-weight:bold;font-family:'Liberation Sans', sans-serif;">week</div>
<div class="r" style="left:1302.7px;top:669px;width:42.299999999999955px;height:20px;background:#2a2a2a;border-radius:4px;"></div>
<div class="t" style="left:1303.00px;width:42px;text-align:center;top:671.88px;font-size:11.6px;color:#ffffff;font-weight:bold;font-family:'Liberation Sans', sans-serif;">date</div>
<svg class="r" style="left:1362px;top:675px;" width="8" height="8" viewBox="0 0 8 8" fill="none"><path d="M1.4 1.4L6.6 6.6M6.6 1.4L1.4 6.6" stroke="#c4c4c4" stroke-width="1.2" stroke-linecap="round"/></svg>
<div class="r" style="left:1096px;top:716px;width:302px;height:1px;background:#323232;"></div>
<div class="t" style="left:1200.60px;top:734.41px;font-size:11.8px;color:#ffffff;font-weight:bold;font-family:'Liberation Sans', sans-serif;">y-axis</div>
<div class="t" style="left:1244.80px;top:734.24px;font-size:12px;color:#ffffff;font-weight:normal;font-family:'Liberation Sans', sans-serif;-webkit-text-stroke:0.4px #ffffff;">(number)</div>
<div class="r" style="left:1106px;top:756px;width:282px;height:28px;border:1px solid #373737;border-radius:5px;"></div>
<svg class="r" style="left:1121px;top:765px;" width="8" height="10" viewBox="0 0 8 10" fill="none"><circle cx="1.6" cy="1.6" r="1.5" fill="#f0f0f0"/><circle cx="6.4" cy="1.6" r="1.5" fill="#f0f0f0"/><circle cx="1.6" cy="5" r="1.5" fill="#f0f0f0"/><circle cx="6.4" cy="5" r="1.5" fill="#f0f0f0"/><circle cx="1.6" cy="8.4" r="1.5" fill="#f0f0f0"/><circle cx="6.4" cy="8.4" r="1.5" fill="#f0f0f0"/></svg>
<div class="t" style="left:1141.20px;top:763.85px;font-size:11.4px;color:#ffffff;font-weight:bold;font-family:'Liberation Sans', sans-serif;">trip_total</div>
<div class="r" style="left:1287px;top:760px;width:58px;height:20px;background:#2a2a2a;border-radius:4px;"></div>
<div class="t" style="left:1287.00px;width:58px;text-align:center;top:763.08px;font-size:11.6px;color:#ffffff;font-weight:bold;font-family:'Liberation Sans', sans-serif;">number</div>
<svg class="r" style="left:1362px;top:766px;" width="8" height="8" viewBox="0 0 8 8" fill="none"><path d="M1.4 1.4L6.6 6.6M6.6 1.4L1.4 6.6" stroke="#c4c4c4" stroke-width="1.2" stroke-linecap="round"/></svg>
<div class="r" style="left:1106px;top:794px;width:282px;height:28px;background:#2a2a2a;border:1px dashed #4a4a4a;border-radius:4px;"></div>
<div class="t" style="left:1147.00px;width:200px;text-align:center;top:803.80px;font-size:9.8px;color:#ffffff;font-weight:bold;font-family:'Liberation Sans', sans-serif;">DRAG COLUMNS HERE</div>
</body></html>
